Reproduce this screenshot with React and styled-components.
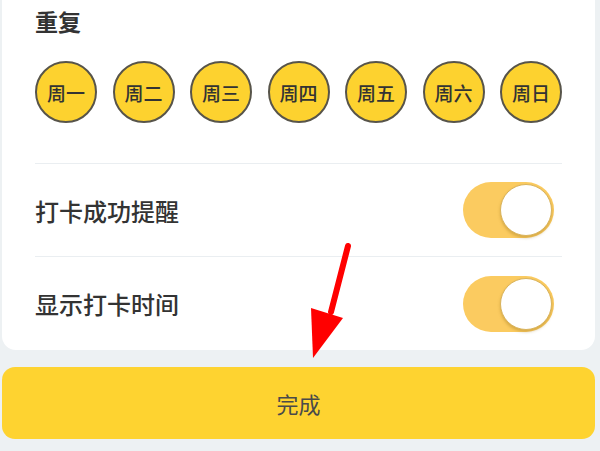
import styled, { createGlobalStyle } from "styled-components";

const GlobalStyle = createGlobalStyle`
  html, body {
    margin: 0;
    padding: 0;
    background: #edf1f3;
    font-family: "Noto Sans CJK SC", "Noto Sans", sans-serif;
  }
`;

const Page = styled.div`
  position: relative;
  width: 600px;
  height: 451px;
  padding: 0 5px 0 2px;
  box-sizing: border-box;
  display: flex;
  flex-direction: column;
  overflow: hidden;
`;

const Card = styled.div`
  background: #fff;
  height: 350px;
  border-radius: 0 0 14px 14px;
  padding: 0 33px;
  box-sizing: border-box;
  display: flex;
  flex-direction: column;
`;

const Title = styled.div`
  margin-top: 5px;
  height: 32px;
  line-height: 32px;
  font-size: 23px;
  font-weight: 700;
  color: #333;
`;

const Days = styled.div`
  margin-top: 24px;
  display: flex;
  justify-content: space-between;
`;

const Day = styled.div`
  width: 62px;
  height: 62px;
  border-radius: 50%;
  box-sizing: border-box;
  border: 2px solid #57544a;
  background: #fdd22f;
  display: flex;
  align-items: center;
  justify-content: center;
  font-size: 19px;
  font-weight: 500;
  color: #333;
`;

const Divider = styled.div`
  height: 1px;
  background: #eaeef1;
  margin-top: ${(p) => p.$top || 0}px;
`;

const Row = styled.div`
  height: ${(p) => p.$h}px;
  display: flex;
  align-items: center;
  justify-content: space-between;
`;

const Label = styled.span`
  font-size: 24px;
  font-weight: 500;
  color: #333;
`;

const Toggle = styled.div`
  width: 91px;
  height: 56px;
  margin-right: 8px;
  border-radius: 28px;
  background: #fbcb60;
  display: flex;
  align-items: center;
  justify-content: flex-end;
  padding-right: 2px;
  box-sizing: border-box;
`;

const Knob = styled.div`
  width: 52px;
  height: 52px;
  border-radius: 50%;
  background: #fff;
  border: 1px solid #d9b35c;
  box-sizing: border-box;
  box-shadow: 0 2px 3px rgba(150, 110, 20, 0.35);
`;

const DoneButton = styled.button`
  margin-top: 17px;
  height: 72px;
  border: none;
  border-radius: 13px;
  background: #fed330;
  font-family: inherit;
  font-size: 22px;
  color: #4a4a4a;
`;

const Arrow = styled.svg`
  position: absolute;
  left: 300px;
  top: 236px;
`;

const days = ["周一", "周二", "周三", "周四", "周五", "周六", "周日"];

export default function App() {
  return (
    <>
      <GlobalStyle />
      <Page>
        <Card>
          <Title>重复</Title>
          <Days>
            {days.map((d) => (
              <Day key={d}>{d}</Day>
            ))}
          </Days>
          <Divider $top={40} />
          <Row $h={92}>
            <Label>打卡成功提醒</Label>
            <Toggle>
              <Knob />
            </Toggle>
          </Row>
          <Divider />
          <Row $h={93}>
            <Label>显示打卡时间</Label>
            <Toggle>
              <Knob />
            </Toggle>
          </Row>
        </Card>
        <DoneButton>完成</DoneButton>
        <Arrow width="60" height="130" viewBox="0 0 60 130">
          <line x1="48" y1="10" x2="31" y2="76" stroke="#ff0000" strokeWidth="6" strokeLinecap="round" />
          <polygon points="11,72 43,82 13,122" fill="#ff0000" />
        </Arrow>
      </Page>
    </>
  );
}
